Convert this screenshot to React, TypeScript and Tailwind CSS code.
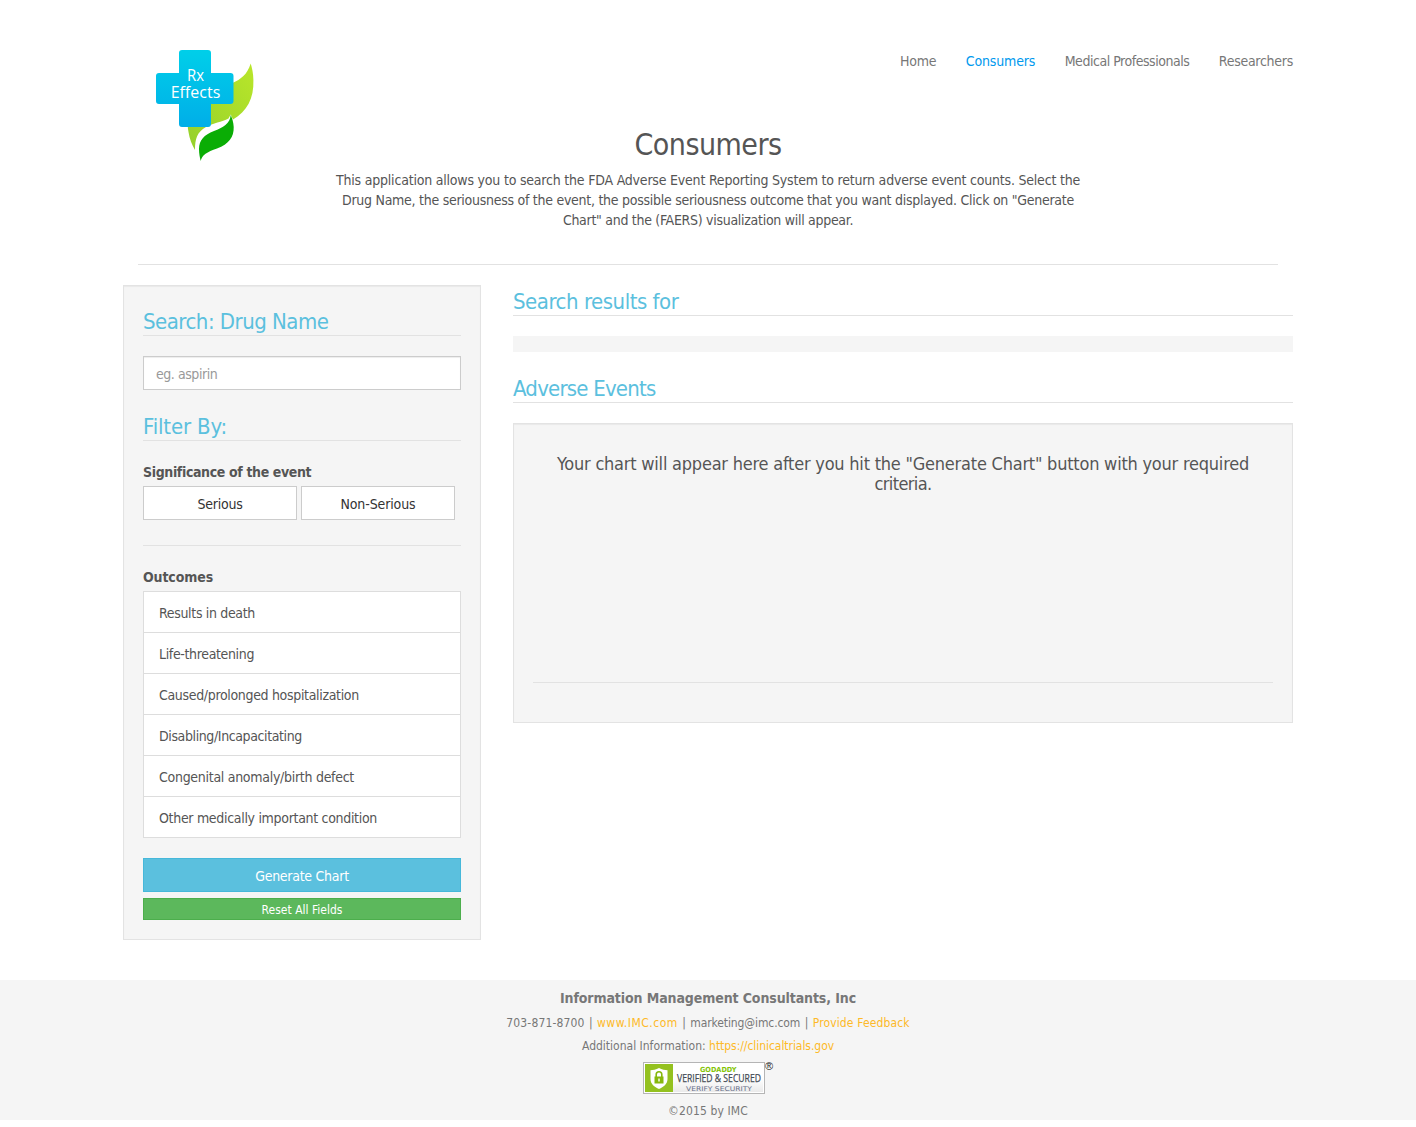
import type { ReactNode } from "react";

const outcomes = [
  { label: "Results in death", tracking: "tracking-[-0.33px]" },
  { label: "Life-threatening", tracking: "tracking-[-0.35px]" },
  { label: "Caused/prolonged hospitalization", tracking: "tracking-[-0.33px]" },
  { label: "Disabling/Incapacitating", tracking: "tracking-[-0.39px]" },
  { label: "Congenital anomaly/birth defect", tracking: "tracking-[-0.285px]" },
  { label: "Other medically important condition", tracking: "tracking-[-0.31px]" },
];

function Logo() {
  return (
    <svg className="ml-[27px] mt-[45px] h-[120px] w-[110px] shrink-0" viewBox="150 45 110 120">
      <defs>
        <linearGradient id="cross" x1="0" y1="0" x2="0" y2="1">
          <stop offset="0" stopColor="#00cfe9" />
          <stop offset="1" stopColor="#00aee8" />
        </linearGradient>
        <linearGradient id="leaf" x1="1" y1="0" x2="0" y2="1">
          <stop offset="0" stopColor="#b9e62a" />
          <stop offset="1" stopColor="#94d02b" />
        </linearGradient>
      </defs>
      <path
        d="M250.700 63.500C247 75 241 79 232.500 83C205 97 184 112 188.500 132C189.500 139 192 145 195 150C195 139 197 132 206 127C213 123 222 122 228.500 118.500L230.700 114.500L233 119.500C247 111 254 99 253.400 80C253.300 73 252 68 250.700 63.500Z"
        fill="url(#leaf)"
      />
      <path
        d="M182 50H208a3 3 0 0 1 3 3V73H230.500a3 3 0 0 1 3 3V101a3 3 0 0 1-3 3H211V124a3 3 0 0 1-3 3H182a3 3 0 0 1-3-3V104H159a3 3 0 0 1-3-3V76a3 3 0 0 1 3-3H179V53a3 3 0 0 1 3-3Z"
        fill="url(#cross)"
      />
      <path
        d="M230.700 115C230 124 223 127.500 214 131C204 135 199 140 199 149C199 154 200 158 200.700 161C202 155 207 152 217 148.500C229 144 234 137 233.700 127C233.500 122 232 118 230.700 115Z"
        fill="#0aad05"
      />
      <g
        fill="#fff"
        textAnchor="middle"
        className="font-['Open_Sans','Noto_Sans',sans-serif] text-[15.5px]"
      >
        <text x="195.500" y="81" textLength="17" lengthAdjust="spacingAndGlyphs">Rx</text>
        <text x="195.500" y="98" textLength="49.500" lengthAdjust="spacingAndGlyphs">Effects</text>
      </g>
    </svg>
  );
}

function SectionTitle({ children, className }: { children: ReactNode; className: string }) {
  return (
    <h3 className={`h-[31px] border-b border-[#e2e2e2] text-[22px] leading-[33px] text-[#5bc0de] ${className}`}>
      {children}
    </h3>
  );
}

function SecurityBadge() {
  return (
    <div className="relative flex h-8 w-[122px] items-center border border-[#b5b5b5] bg-gradient-to-b from-white from-50% to-[#e9e9e9] outline-1 -outline-offset-2 outline-white">
      <svg className="h-7 w-7 ml-px shrink-0" viewBox="0 0 28 28">
        <path d="M0 0H28V28H0Z" fill="#94c11f" />
        <path d="M14 4C17 5.500 20 6.200 22.500 6.200V15C22.500 20 18.500 23 14 25C9.500 23 5.500 20 5.500 15V6.200C8 6.200 11 5.500 14 4Z" fill="#fff" />
        <path d="M9.500 12.500H18.500V19.500H9.500Z" fill="#86b80c" />
        <path d="M11.200 13V10.500a2.800 2.800 0 0 1 5.600 0V13" fill="none" stroke="#86b80c" strokeWidth="1.600" />
        <path d="M13.300 14.500H14.700V17.500H13.300Z" fill="#fff" />
      </svg>
      <svg className="h-[30px] w-[90px] shrink-0 overflow-visible" viewBox="0 0 90 30">
        <text x="27" y="8.500" textLength="36.500" lengthAdjust="spacingAndGlyphs" fill="#84c406" className="font-['DejaVu_Sans'] text-[7px] font-bold">GODADDY</text>
        <text x="4" y="19" textLength="84" lengthAdjust="spacingAndGlyphs" fill="#454c56" stroke="#454c56" strokeWidth=".25" className="font-['Open_Sans'] text-[10.5px]">VERIFIED &amp; SECURED</text>
        <text x="13" y="28" textLength="66" lengthAdjust="spacingAndGlyphs" fill="#69708a" className="font-['DejaVu_Sans'] text-[6.5px]">VERIFY SECURITY</text>
      </svg>
      <span className="absolute -top-1 left-[121px] font-['Liberation_Sans',sans-serif] text-[11px] leading-[14px] text-[#222]">®</span>
    </div>
  );
}

export default function App() {
  return (
    <div className="min-h-[1127px] bg-white font-['DejaVu_Sans_Condensed','DejaVu_Sans',sans-serif] text-[14px] leading-5 text-[#555]">
      <div className="mx-auto w-[1170px]">
        <header className="flex h-[124px] items-start justify-between">
          <Logo />
          <nav className="mt-[51px] flex gap-[29.5px] whitespace-nowrap text-[#777]">
            <a className="tracking-[-0.2px]">Home</a>
            <a className="tracking-[-0.16px] text-[#0099ee]">Consumers</a>
            <a className="tracking-[-0.47px]">Medical Professionals</a>
            <a className="tracking-[-0.27px]">Researchers</a>
          </nav>
        </header>

        <section className="mx-[15px] h-[141px] border-b border-[#e2e2e2] text-center whitespace-nowrap">
          <h1 className="h-[46px] pt-1 text-[30px] leading-[33px] tracking-[-0.52px]">Consumers</h1>
          <p className="flex flex-col">
            <span className="tracking-[-0.205px]">
              This application allows you to search the FDA Adverse Event Reporting System to return adverse event counts. Select the
            </span>
            <span className="tracking-[-0.27px]">
              Drug Name, the seriousness of the event, the possible seriousness outcome that you want displayed. Click on "Generate
            </span>
            <span className="tracking-[-0.29px]">Chart" and the (FAERS) visualization will appear.</span>
          </p>
        </section>

        <main className="mt-5 flex items-start gap-8">
          <aside className="flex h-[655px] w-[358px] flex-col border border-[#e3e3e3] bg-[#f5f5f5] px-[19px] pt-[19px] shadow-[inset_0_1px_1px_rgba(0,0,0,0.05)]">
            <SectionTitle className="tracking-[-0.51px]">Search: Drug Name</SectionTitle>
            <input
              placeholder="eg. aspirin"
              className="mt-5 h-[34px] border border-[#ccc] bg-white px-3 pt-0.5 tracking-[-0.45px] shadow-[inset_0_1px_1px_rgba(0,0,0,0.075)] outline-none placeholder:text-[#999]"
            />
            <SectionTitle className="mt-5 tracking-[-0.15px]">Filter By:</SectionTitle>

            <h4 className="mt-[21px] font-bold tracking-[-0.37px]">Significance of the event</h4>
            <div className="mt-1 flex gap-1 text-[#333]">
              <button className="h-[34px] w-[154px] border border-[#ccc] bg-white pt-0.5 tracking-[-0.24px]">Serious</button>
              <button className="h-[34px] w-[154px] border border-[#ccc] bg-white pt-0.5 tracking-[-0.12px]">Non-Serious</button>
            </div>
            <hr className="mt-[25px] border-[#e2e2e2]" />

            <h4 className="mt-[21px] font-bold tracking-[-0.12px]">Outcomes</h4>
            <ul className="mt-1 divide-y divide-[#ddd] border border-[#ddd] bg-white">
              {outcomes.map(({ label, tracking }, i) => (
                <li key={label} className={`${i === outcomes.length - 1 ? "h-10" : "h-[41px]"} px-[15px] pt-[11px] ${tracking}`}>
                  {label}
                </li>
              ))}
            </ul>
            <button className="mt-5 h-[34px] border border-[#46b8da] bg-[#5bc0de] pt-0.5 tracking-[-0.27px] text-white">
              Generate Chart
            </button>
            <button className="mt-1.5 h-[22px] border border-[#4cae4c] bg-[#5cb85c] pt-0.5 text-xs leading-[18px] text-white">
              Reset All Fields
            </button>
          </aside>

          <section className="w-[780px]">
            <SectionTitle className="tracking-[-0.48px]">Search results for</SectionTitle>
            <div className="mt-5 h-4 bg-[#f5f5f5]" />
            <SectionTitle className="mt-5 tracking-[-0.79px]">Adverse Events</SectionTitle>
            <div className="mt-5 h-[300px] border border-[#e3e3e3] bg-[#f5f5f5] px-[19px] pt-[30px] shadow-[inset_0_1px_1px_rgba(0,0,0,0.05)]">
              <p className="flex h-[229px] flex-col border-b border-[#e2e2e2] text-center text-lg leading-5">
                <span className="tracking-[-0.22px]">
                  Your chart will appear here after you hit the "Generate Chart" button with your required
                </span>
                <span className="tracking-[-0.62px]">criteria.</span>
              </p>
            </div>
          </section>
        </main>
      </div>

      <footer className="mt-10 flex h-[140px] flex-col items-center bg-[#f5f5f5] text-xs leading-5 whitespace-nowrap text-[#777]">
        <p className="mt-2 text-[14px] font-bold tracking-[-0.1px]">Information Management Consultants, Inc</p>
        <p className="mt-[5px] flex gap-[4.4px]">
          <span className="tracking-[0.15px]">703-871-8700</span>
          <span>|</span>
          <a className="tracking-[0.5px] text-[#fdb927]">www.IMC.com</a>
          <span>|</span>
          <span className="tracking-[-0.1px]">marketing@imc.com</span>
          <span>|</span>
          <a className="tracking-[0.14px] text-[#fdb927]">Provide Feedback</a>
        </p>
        <p className="mt-[3px]">
          Additional Information: <a className="tracking-[-0.05px] text-[#fdb927]">https://clinicaltrials.gov</a>
        </p>
        <div className="mt-[6px] mr-[8px]">
          <SecurityBadge />
        </div>
        <p className="mt-[7px] tracking-[0.13px]">©2015 by IMC</p>
      </footer>
    </div>
  );
}
